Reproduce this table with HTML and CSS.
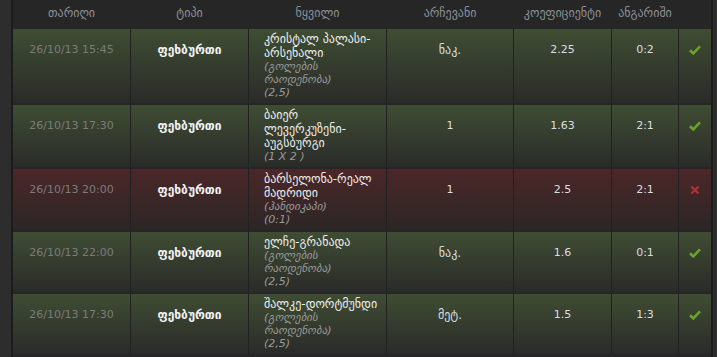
FILE: index.html
```html
<!DOCTYPE html>
<html lang="ka">
<head>
<meta charset="utf-8">
<title>ფსონები</title>
<link rel="stylesheet" href="styles.css">
</head>
<body>
<div class="frame">
<table class="bets">
  <thead>
    <tr>
      <th class="c-date">თარიღი</th>
      <th class="c-type">ტიპი</th>
      <th class="c-event">ნყვილი</th>
      <th class="c-pick">არჩევანი</th>
      <th class="c-odds">კოეფიციენტი</th>
      <th class="c-score">ანგარიში</th>
      <th class="c-res"></th>
    </tr>
  </thead>
  <tbody>
    <tr class="win">
      <td class="date">26/10/13 15:45</td>
      <td class="type">ფეხბურთი</td>
      <td class="event"><span class="name">კრისტალ პალასი-<br>არსენალი</span><span class="sub">(გოლების<br>რაოდენობა)<br>(2,5)</span></td>
      <td class="val geo">ნაკ.</td>
      <td class="val">2.25</td>
      <td class="val">0:2</td>
      <td class="res"><svg class="ico" width="12" height="10" viewBox="0 0 12 10"><path d="M1 5.2 L4.3 8.4 L11 1.4" fill="none" stroke="#6aa32c" stroke-width="2.6"/></svg></td>
    </tr>
    <tr class="win">
      <td class="date">26/10/13 17:30</td>
      <td class="type">ფეხბურთი</td>
      <td class="event"><span class="name">ბაიერ<br>ლევერკუზენი-<br>აუგსბურგი</span><span class="sub">(1 X 2 )</span></td>
      <td class="val">1</td>
      <td class="val">1.63</td>
      <td class="val">2:1</td>
      <td class="res"><svg class="ico" width="12" height="10" viewBox="0 0 12 10"><path d="M1 5.2 L4.3 8.4 L11 1.4" fill="none" stroke="#6aa32c" stroke-width="2.6"/></svg></td>
    </tr>
    <tr class="lose">
      <td class="date">26/10/13 20:00</td>
      <td class="type">ფეხბურთი</td>
      <td class="event"><span class="name">ბარსელონა-რეალ<br>მადრიდი</span><span class="sub">(ჰანდიკაპი)<br>(0:1)</span></td>
      <td class="val">1</td>
      <td class="val">2.5</td>
      <td class="val">2:1</td>
      <td class="res"><svg class="ico" width="10" height="10" viewBox="0 0 10 10"><path d="M1.5 1.5 L8.5 8.5 M8.5 1.5 L1.5 8.5" fill="none" stroke="#b3302e" stroke-width="2.4"/></svg></td>
    </tr>
    <tr class="win">
      <td class="date">26/10/13 22:00</td>
      <td class="type">ფეხბურთი</td>
      <td class="event"><span class="name">ელჩე-გრანადა</span><span class="sub">(გოლების<br>რაოდენობა)<br>(2,5)</span></td>
      <td class="val geo">ნაკ.</td>
      <td class="val">1.6</td>
      <td class="val">0:1</td>
      <td class="res"><svg class="ico" width="12" height="10" viewBox="0 0 12 10"><path d="M1 5.2 L4.3 8.4 L11 1.4" fill="none" stroke="#6aa32c" stroke-width="2.6"/></svg></td>
    </tr>
    <tr class="win">
      <td class="date">26/10/13 17:30</td>
      <td class="type">ფეხბურთი</td>
      <td class="event"><span class="name">შალკე-დორტმუნდი</span><span class="sub">(გოლების<br>რაოდენობა)<br>(2,5)</span></td>
      <td class="val geo">მეტ.</td>
      <td class="val">1.5</td>
      <td class="val">1:3</td>
      <td class="res"><svg class="ico" width="12" height="10" viewBox="0 0 12 10"><path d="M1 5.2 L4.3 8.4 L11 1.4" fill="none" stroke="#6aa32c" stroke-width="2.6"/></svg></td>
    </tr>
  </tbody>
</table>
</div>
</body>
</html>
```
FILE: styles.css
```css
html, body {
  margin: 0;
  padding: 0;
}
body {
  background: #2d2d2d;
  height: 357px;
  overflow: hidden;
  font-family: "DejaVu Sans", "Noto Sans", sans-serif;
  font-size: 11px;
}
.frame {
  margin-left: 11px;
  width: 698px;
  height: 357px;
  border-left: 2px solid #1c1c1c;
  border-right: 2px solid #1c1c1c;
  background: #262626;
}
.bets {
  width: 698px;
  table-layout: fixed;
  border-collapse: separate;
  border-spacing: 0;
}
.bets th {
  box-sizing: border-box;
  height: 27px;
  padding: 0 0 1px;
  font-size: 12px;
  font-weight: normal;
  color: #8b9096;
  text-align: center;
  vertical-align: middle;
  white-space: nowrap;
}
.bets th + th {
  border-left: 1px solid #262626;
}
.c-date { width: 117px; }
.c-type { width: 118px; }
.c-event { width: 138px; }
.c-pick { width: 127px; }
.c-odds { width: 98px; }
.c-score { width: 67px; }
.c-res { width: 33px; }

.bets td {
  box-sizing: border-box;
  border-top: 2px solid #262626;
  padding: 14px 2px 4px;
  line-height: 14px;
  text-align: center;
  vertical-align: top;
  white-space: nowrap;
}
.bets td + td {
  border-left: 1px solid #212121;
}
.win td {
  background: linear-gradient(#3f4d33, #2a2b29);
}
.lose td {
  background: linear-gradient(#4b2728, #2c2626);
}
.date {
  color: #7b7b7b;
}
.bets td.type {
  color: #f2f2f2;
  font-size: 12px;
  font-weight: bold;
}
.bets td.event {
  text-align: left;
  padding: 3px 0 4px 15px;
}
.name {
  display: block;
  font-size: 12px;
  line-height: 14px;
  color: #ececec;
}
.sub {
  display: block;
  color: #9a9a9a;
  font-style: italic;
  font-size: 11px;
  line-height: 13px;
}
.val {
  color: #d9dde2;
}
.bets td.geo {
  font-size: 12px;
}
.bets td.res {
  padding-top: 16px;
  line-height: 10px;
}
.ico {
  display: inline-block;
  vertical-align: top;
}
```
